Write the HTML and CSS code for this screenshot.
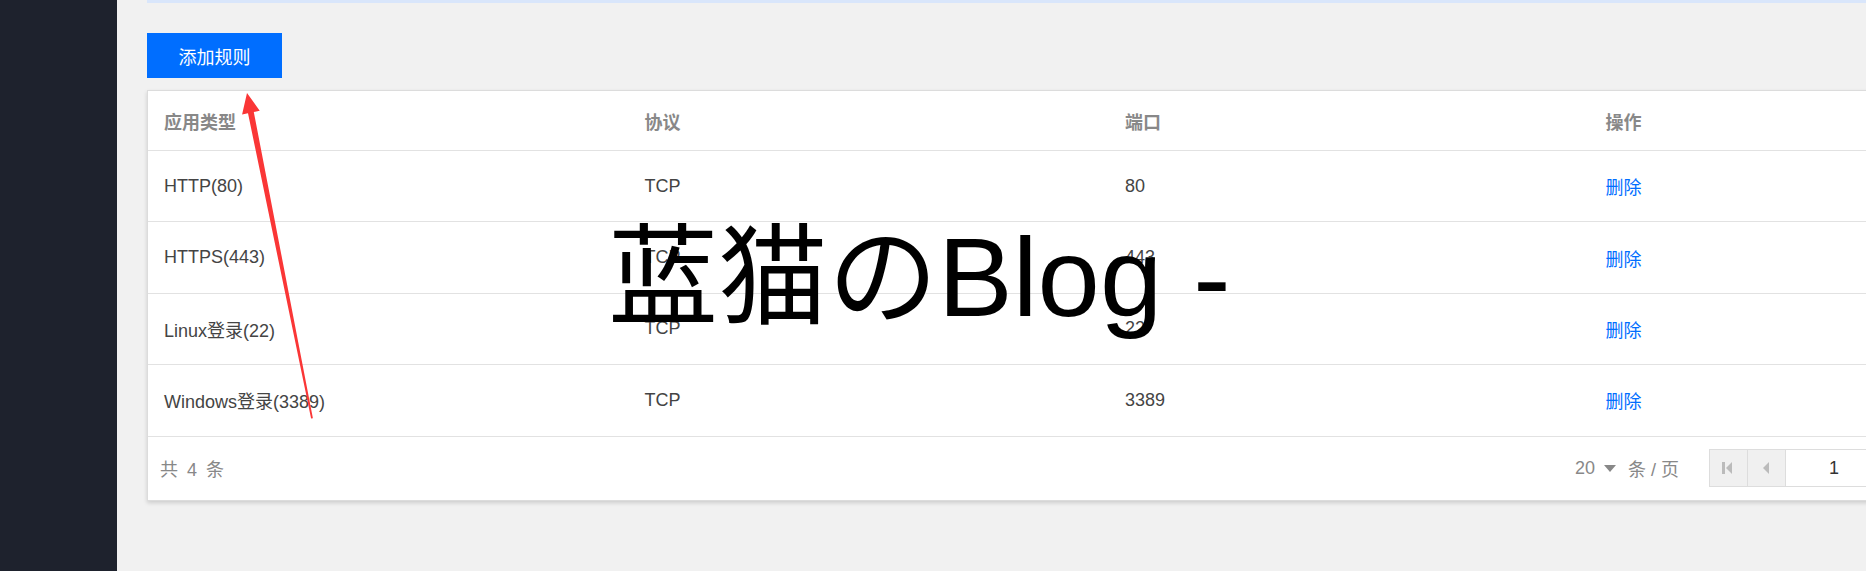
FILE: index.html
```html
<!DOCTYPE html>
<html lang="zh-CN">

<head>
  <meta charset="UTF-8">
  <meta name="viewport" content="width=device-width, initial-scale=1.0">
  <title>安全组规则</title>
  <link rel="stylesheet" href="styles.css">
</head>

<body>
  <div class="layout">
    <aside class="sidebar"></aside>

    <main class="main">
      <div class="notice"></div>

      <div class="toolbar">
        <button class="btn-primary">添加规则</button>
      </div>

      <div class="card">
        <table class="rule-table">
          <thead>
            <tr>
              <th>应用类型</th>
              <th>协议</th>
              <th>端口</th>
              <th>操作</th>
            </tr>
          </thead>
          <tbody>
            <tr>
              <td>HTTP(80)</td>
              <td>TCP</td>
              <td>80</td>
              <td><a class="link" href="#">删除</a></td>
            </tr>
            <tr>
              <td>HTTPS(443)</td>
              <td>TCP</td>
              <td>443</td>
              <td><a class="link" href="#">删除</a></td>
            </tr>
            <tr>
              <td>Linux登录(22)</td>
              <td>TCP</td>
              <td>22</td>
              <td><a class="link" href="#">删除</a></td>
            </tr>
            <tr>
              <td>Windows登录(3389)</td>
              <td>TCP</td>
              <td>3389</td>
              <td><a class="link" href="#">删除</a></td>
            </tr>
          </tbody>
        </table>

        <div class="card-footer">
          <span class="total">共 4 条</span>

          <div class="pager">
            <span class="page-size">20 <i class="caret"></i></span>
            <span class="page-unit">条 / 页</span>
            <div class="pager-box">
              <span class="pager-btn">
                <svg width="12" height="14" viewBox="0 0 12 14"><rect x="0" y="1" width="3" height="12" fill="#bbb"/><path d="M4 7 L10 1 L10 13 Z" fill="#bbb"/></svg>
              </span>
              <span class="pager-btn">
                <svg width="8" height="14" viewBox="0 0 8 14"><path d="M1 7 L7 1 L7 13 Z" fill="#bbb"/></svg>
              </span>
              <span class="pager-input">1</span>
              <span class="pager-count">/ 1 页</span>
              <span class="pager-btn">
                <svg width="8" height="14" viewBox="0 0 8 14"><path d="M7 7 L1 1 L1 13 Z" fill="#bbb"/></svg>
              </span>
              <span class="pager-btn">
                <svg width="12" height="14" viewBox="0 0 12 14"><path d="M8 7 L2 1 L2 13 Z" fill="#bbb"/><rect x="9" y="1" width="3" height="12" fill="#bbb"/></svg>
              </span>
            </div>
          </div>
        </div>
      </div>
    </main>
  </div>

  <!-- annotation drawn over the screenshot -->
  <svg class="annot-arrow" width="1866" height="571" viewBox="0 0 1866 571">
    <path d="M247 93 L259.7 110.8 L253.8 112 L312.9 418.2 L311.1 418.6 L248 113.2 L242.1 114.4 Z" fill="#fa3636"/>
  </svg>

  <div class="watermark"><span class="watermark-cjk">蓝猫の</span>Blog -</div>
</body>

</html>
```

FILE: styles.css
```css
html,
body {
  margin: 0;
  padding: 0;
  height: 100%;
  overflow: hidden;
}

body {
  font-family: "Liberation Sans", Arial, "Noto Sans CJK SC", sans-serif;
  font-size: 18px;
  color: #444;
  background-color: #f1f1f1;
}

.layout {
  display: flex;
  height: 100vh;
}

.sidebar {
  width: 117px;
  flex-shrink: 0;
  background-color: #1e222d;
}

.main {
  flex: 1;
  min-width: 0;
  overflow: hidden;
  padding-left: 30px;
}

.notice {
  height: 3px;
  background-color: #d9e6fb;
}

.toolbar {
  margin-top: 30px;
}

.btn-primary {
  width: 135px;
  height: 45px;
  border: none;
  padding: 0;
  background-color: #006eff;
  color: #fff;
  font-family: inherit;
  font-size: 18px;
  cursor: pointer;
}

.card {
  margin-top: 12px;
  width: 1924px;
  box-sizing: border-box;
  background-color: #fff;
  border: 1px solid #dcdcdc;
  box-shadow: 0 2px 4px rgba(0, 0, 0, 0.15);
}

.rule-table {
  width: 100%;
  table-layout: fixed;
  border-collapse: collapse;
}

.rule-table th,
.rule-table td {
  text-align: left;
  padding: 0 16px;
  border-bottom: 1px solid #e2e2e2;
}

.rule-table th {
  height: 59px;
  font-weight: bold;
  color: #888;
}

.rule-table td {
  height: 70.4px;
  color: #444;
}

.link {
  color: #006eff;
  text-decoration: none;
}

.card-footer {
  display: flex;
  align-items: center;
  justify-content: space-between;
  height: 63px;
  padding: 0 44px 0 12px;
  color: #888;
}

.total {
  letter-spacing: 2px;
}

.pager {
  display: flex;
  align-items: center;
}

.page-size {
  display: flex;
  align-items: center;
}

.caret {
  display: inline-block;
  margin-left: 9px;
  border-left: 6px solid transparent;
  border-right: 6px solid transparent;
  border-top: 7px solid #888;
}

.page-unit {
  margin-left: 12px;
  margin-right: 30px;
}

.pager-box {
  display: flex;
  height: 38px;
  border: 1px solid #ddd;
  box-sizing: border-box;
}

.pager-btn {
  width: 37px;
  display: flex;
  align-items: center;
  justify-content: center;
  background-color: #f0f0f0;
  border-right: 1px solid #ddd;
}

.pager-btn:last-child {
  border-right: none;
  border-left: 1px solid #ddd;
}

.pager-input {
  width: 96px;
  display: flex;
  align-items: center;
  justify-content: center;
  color: #333;
}

.pager-count {
  display: flex;
  align-items: center;
  padding: 0 12px;
  color: #888;
}

.annot-arrow {
  position: absolute;
  left: 0;
  top: 0;
  pointer-events: none;
}

.watermark {
  position: absolute;
  left: 608px;
  top: 222px;
  font-family: "Liberation Sans", Arial, "Noto Sans CJK SC", sans-serif;
  font-size: 112px;
  line-height: 1;
  color: #000;
  white-space: nowrap;
  pointer-events: none;
}

.watermark-cjk {
  font-size: 110px;
}
```
